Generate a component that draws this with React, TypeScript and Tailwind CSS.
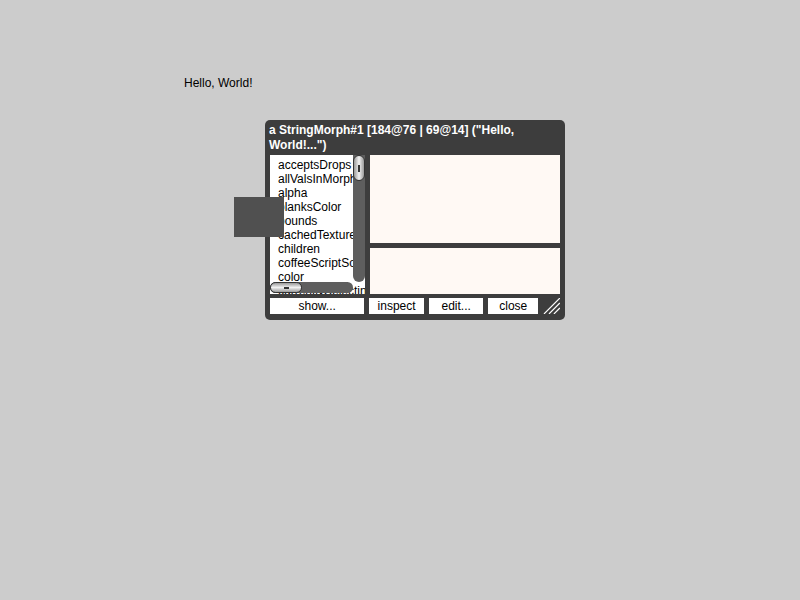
import React from 'react';

const slots = [
  'acceptsDrops',
  'allValsInMorphHierarchy',
  'alpha',
  'blanksColor',
  'bounds',
  'cachedTexture',
  'children',
  'coffeeScriptSource',
  'color',
  'currentlySelecting',
];

const Thumb: React.FC<{ vertical?: boolean }> = ({ vertical }) => (
  <div
    className={
      vertical
        ? 'absolute left-[0px] top-[0px] w-[12px] h-[26px] rounded-[6px] border border-[#333] bg-gradient-to-r from-[#9a9a9a] via-[#f2f2f2] to-[#9a9a9a] flex items-center justify-center'
        : 'absolute left-[0px] top-[0px] w-[32px] h-[11px] rounded-[6px] border border-[#333] bg-gradient-to-b from-[#9a9a9a] via-[#f2f2f2] to-[#9a9a9a] flex items-center justify-center'
    }
  >
    <div className={vertical ? 'w-[2px] h-[7px] bg-[#333]' : 'w-[5px] h-[2px] bg-[#333]'} />
  </div>
);

const Btn: React.FC<{ label: string; w: string }> = ({ label, w }) => (
  <div className={`${w} h-[16px] bg-white text-black text-[12px] leading-[16px] text-center`}>{label}</div>
);

export default function App() {
  return (
    <div className="relative w-[800px] h-[600px] bg-[#cccccc] overflow-hidden font-['Liberation_Sans',Arial,sans-serif]">
      <div className="absolute left-[184px] top-[75px] text-[12px] leading-[16px] text-black">Hello, World!</div>

      <div className="absolute left-[265px] top-[120px] w-[300px] h-[200px] rounded-[5px] bg-[#3d3d3d] pl-[5px] pr-[5px] pt-[3px] flex flex-col">
        <div className="h-[32px] -ml-[1px] text-white font-bold text-[12px] leading-[15px]">
          a StringMorph#1 [184@76 | 69@14] ("Hello, World!...")
        </div>
        <div className="flex gap-[5px] h-[139px]">
          <div className="relative w-[95px] h-[139px] bg-white overflow-hidden">
            <div className="pl-[8px] pt-[3px] text-[12px] leading-[14px] text-black whitespace-nowrap">
              {slots.map(s => (
                <div key={s}>{s}</div>
              ))}
            </div>
            <div className="absolute left-[83px] top-[0px] w-[12px] h-[127px] rounded-b-[6px] bg-[#5e5e5e]">
              <Thumb vertical />
            </div>
            <div className="absolute left-[0px] top-[127px] w-[83px] h-[11px] rounded-[6px] bg-[#5e5e5e]">
              <Thumb />
            </div>
          </div>
          <div className="flex flex-col gap-[5px] w-[190px]">
            <div className="h-[88px] bg-[#fff9f4]" />
            <div className="h-[46px] bg-[#fff9f4]" />
          </div>
        </div>
        <div className="flex gap-[5px] mt-[4px] items-center">
          <Btn label="show..." w="w-[95px]" />
          <Btn label="inspect" w="w-[55px]" />
          <Btn label="edit..." w="w-[55px]" />
          <Btn label="close" w="w-[50px]" />
          <svg width="17" height="16" viewBox="0 0 17 16">
            <g stroke="#ffffff" strokeWidth="1.2">
              <line x1="1" y1="16" x2="17" y2="0" />
              <line x1="6" y1="16" x2="17" y2="5" />
              <line x1="11" y1="16" x2="17" y2="10" />
            </g>
          </svg>
        </div>
      </div>

      <div className="absolute left-[234px] top-[197px] w-[50px] h-[40px] bg-[#505050]" />
    </div>
  );
}
